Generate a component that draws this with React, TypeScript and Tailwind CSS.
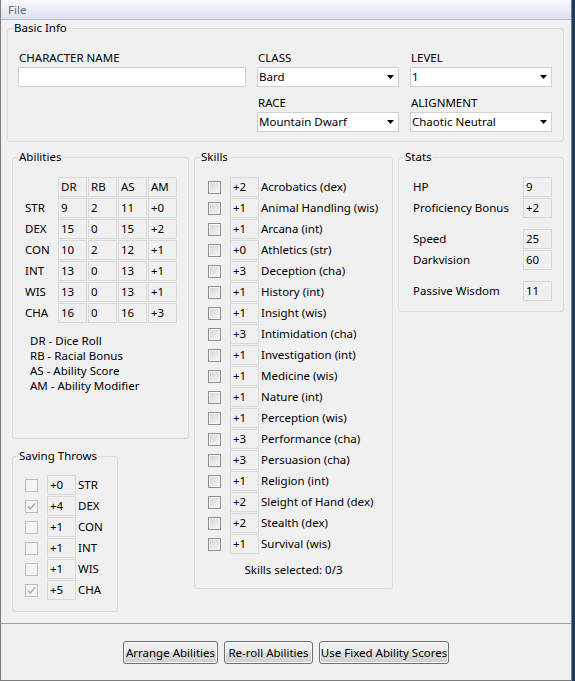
import React from 'react';

const abilities = [
    ['STR', '9', '2', '11', '+0'],
    ['DEX', '15', '0', '15', '+2'],
    ['CON', '10', '2', '12', '+1'],
    ['INT', '13', '0', '13', '+1'],
    ['WIS', '13', '0', '13', '+1'],
    ['CHA', '16', '0', '16', '+3'],
];

const saves: [boolean, string, string][] = [
    [false, '+0', 'STR'],
    [true, '+4', 'DEX'],
    [false, '+1', 'CON'],
    [false, '+1', 'INT'],
    [false, '+1', 'WIS'],
    [true, '+5', 'CHA'],
];

const skills = [
    ['+2', 'Acrobatics (dex)'],
    ['+1', 'Animal Handling (wis)'],
    ['+1', 'Arcana (int)'],
    ['+0', 'Athletics (str)'],
    ['+3', 'Deception (cha)'],
    ['+1', 'History (int)'],
    ['+1', 'Insight (wis)'],
    ['+3', 'Intimidation (cha)'],
    ['+1', 'Investigation (int)'],
    ['+1', 'Medicine (wis)'],
    ['+1', 'Nature (int)'],
    ['+1', 'Perception (wis)'],
    ['+3', 'Performance (cha)'],
    ['+3', 'Persuasion (cha)'],
    ['+1', 'Religion (int)'],
    ['+2', 'Sleight of Hand (dex)'],
    ['+2', 'Stealth (dex)'],
    ['+1', 'Survival (wis)'],
];

const Group = ({ title, className, children }: { title: string; className?: string; children: React.ReactNode }) => (
    <fieldset className={`border border-[#d5dfe5] rounded-[3px] p-0 m-0 min-w-0 ${className ?? ''}`}>
        <legend className="ml-[5px] px-[1px] leading-[16px]">{title}</legend>
        {children}
    </fieldset>
);

const Value = ({ v }: { v: string }) => (
    <div className="w-[29px] h-[20px] border border-[#d9d9d9] pl-[2px] leading-[18px] shrink-0">{v}</div>
);

const Check = ({ checked, disabled }: { checked?: boolean; disabled?: boolean }) => (
    <div
        className={
            disabled
                ? 'w-[13px] h-[13px] border border-[#bdbdbd] bg-[#f4f4f4] flex items-center justify-center shrink-0'
                : 'w-[13px] h-[13px] border border-[#8e8f8f] bg-gradient-to-br from-[#d4d4d4] to-[#f7f7f7] shadow-[inset_0_0_0_1px_#f4f4f4] shrink-0'
        }
    >
        {checked && (
            <svg width="11" height="11" viewBox="0 0 11 11">
                <path d="M2 5.5 L4.3 8 L9 2.5" fill="none" stroke="#a9a9a9" strokeWidth="1.4" />
            </svg>
        )}
    </div>
);

const Select = ({ value }: { value: string }) => (
    <div className="h-[20px] bg-white border border-[#cdd1d6] flex items-center justify-between pl-[1px] pr-[4px]">
        <span className="leading-[18px]">{value}</span>
        <svg width="7" height="4" viewBox="0 0 7 4">
            <path d="M0 0 H7 L3.5 4 Z" fill="#000" />
        </svg>
    </div>
);

const Field = ({ label, children }: { label: string; children: React.ReactNode }) => (
    <div>
        <div className="h-[15px] leading-[15px] pl-[1px] mb-[2px]">{label}</div>
        {children}
    </div>
);

const btn =
    'h-[23px] border border-[#707070] rounded-[3px] bg-[linear-gradient(#f2f2f2_0%,#ebebeb_50%,#dddddd_50%,#cfcfcf_100%)] shadow-[inset_0_0_0_1px_#fbfbfb] text-black leading-[20px]';

export default function App() {
    return (
        <div className="w-[575px] h-[681px] flex bg-[#1c3a5b] font-['Noto_Sans',sans-serif] text-[11.5px] text-black">
            <div className="w-[572px] h-[681px] border-l border-r border-b border-[#7c7c7c] bg-[#f0f0f0] flex flex-col">
                <div className="h-[20px] border-b border-[#b7bdc8] bg-gradient-to-b from-[#f8f9fd] to-[#dce2f1] pl-[7px] leading-[19px] text-[#6d6d6d]">
                    File
                </div>

                <div className="h-[603px]">
                    <Group title="Basic Info" className="ml-[6px] mr-[7px]">
                        <div className="pt-[14px] pl-[10px] pb-[9px] grid grid-cols-[228px_142px_142px] gap-x-[11px] gap-y-[8px]">
                            <Field label="CHARACTER NAME">
                                <div className="h-[20px] bg-white border border-[#cdd1d6]" />
                            </Field>
                            <Field label="CLASS">
                                <Select value="Bard" />
                            </Field>
                            <Field label="LEVEL">
                                <Select value="1" />
                            </Field>
                            <div />
                            <Field label="RACE">
                                <Select value="Mountain Dwarf" />
                            </Field>
                            <Field label="ALIGNMENT">
                                <Select value="Chaotic Neutral" />
                            </Field>
                        </div>
                    </Group>

                    <div className="flex gap-[5px] ml-[11px] mt-[7px]">
                        <div className="flex flex-col gap-[9px]">
                            <Group title="Abilities" className="w-[177px] h-[290px]">
                                <div className="pt-[12px] pl-[12px]">
                                    <div className="grid grid-cols-[32px_29px_29px_29px_29px] gap-[1px]">
                                        <div />
                                        {['DR', 'RB', 'AS', 'AM'].map((h) => (
                                            <Value key={h} v={h} />
                                        ))}
                                        {abilities.map((row) => (
                                            <React.Fragment key={row[0]}>
                                                <div className="h-[20px] leading-[20px]">{row[0]}</div>
                                                {row.slice(1).map((v, i) => (
                                                    <Value key={i} v={v} />
                                                ))}
                                            </React.Fragment>
                                        ))}
                                    </div>
                                    <div className="mt-[10px] pl-[5px] leading-[15px]">
                                        <div>DR - Dice Roll</div>
                                        <div>RB - Racial Bonus</div>
                                        <div>AS - Ability Score</div>
                                        <div>AM - Ability Modifier</div>
                                    </div>
                                </div>
                            </Group>

                            <Group title="Saving Throws" className="w-[106px] h-[164px]">
                                <div className="pt-[11px] pl-[12px] flex flex-col gap-[1px]">
                                    {saves.map(([checked, v, name]) => (
                                        <div key={name} className="flex items-center h-[20px]">
                                            <Check checked={checked} disabled />
                                            <div className="ml-[9px]">
                                                <Value v={v} />
                                            </div>
                                            <span className="ml-[2px]">{name}</span>
                                        </div>
                                    ))}
                                </div>
                            </Group>
                        </div>

                        <Group title="Skills" className="w-[199px] h-[440px]">
                            <div className="pt-[12px] pl-[13px] flex flex-col gap-[1px]">
                                {skills.map(([v, name]) => (
                                    <div key={name} className="flex items-center h-[20px]">
                                        <Check />
                                        <div className="ml-[9px]">
                                            <Value v={v} />
                                        </div>
                                        <span className="ml-[2px] whitespace-nowrap">{name}</span>
                                    </div>
                                ))}
                            </div>
                            <div className="mt-[8px] text-center leading-[15px]">Skills selected: 0/3</div>
                        </Group>

                        <Group title="Stats" className="w-[166px] h-[163px]">
                            <div className="pt-[12px] pl-[14px] pr-[11px] flex flex-col">
                                <div className="flex flex-col gap-[1px]">
                                    <div className="flex justify-between items-center h-[20px]">
                                        <span>HP</span>
                                        <Value v="9" />
                                    </div>
                                    <div className="flex justify-between items-center h-[20px]">
                                        <span>Proficiency Bonus</span>
                                        <Value v="+2" />
                                    </div>
                                </div>
                                <div className="flex flex-col gap-[1px] mt-[11px]">
                                    <div className="flex justify-between items-center h-[20px]">
                                        <span>Speed</span>
                                        <Value v="25" />
                                    </div>
                                    <div className="flex justify-between items-center h-[20px]">
                                        <span>Darkvision</span>
                                        <Value v="60" />
                                    </div>
                                </div>
                                <div className="flex justify-between items-center h-[20px] mt-[11px]">
                                    <span>Passive Wisdom</span>
                                    <Value v="11" />
                                </div>
                            </div>
                        </Group>
                    </div>
                </div>

                <div className="h-[57px] border-t border-[#a0a0a0] pt-[17px] flex justify-center gap-[6px]">
                    <button className={`${btn} w-[95px]`}>Arrange Abilities</button>
                    <button className={`${btn} w-[89px]`}>Re-roll Abilities</button>
                    <button className={`${btn} w-[130px]`}>Use Fixed Ability Scores</button>
                </div>
            </div>
        </div>
    );
}
